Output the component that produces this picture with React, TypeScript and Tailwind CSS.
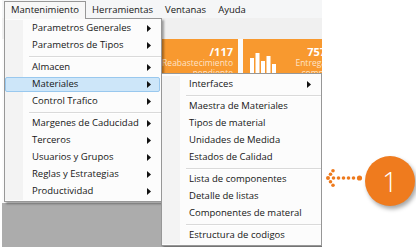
import React from 'react';

type Entry = { label: string; sub?: boolean; active?: boolean } | 'sep';

const mainItems: Entry[] = [
  { label: 'Parametros Generales', sub: true },
  { label: 'Parametros de Tipos', sub: true },
  'sep',
  { label: 'Almacen', sub: true },
  { label: 'Materiales', sub: true, active: true },
  { label: 'Control Trafico', sub: true },
  'sep',
  { label: 'Margenes de Caducidad', sub: true },
  { label: 'Terceros', sub: true },
  { label: 'Usuarios y Grupos', sub: true },
  { label: 'Reglas y Estrategias', sub: true },
  { label: 'Productividad', sub: true },
];

const subItems: Entry[] = [
  { label: 'Interfaces', sub: true },
  'sep',
  { label: 'Maestra de Materiales' },
  { label: 'Tipos de material' },
  { label: 'Unidades de Medida' },
  { label: 'Estados de Calidad' },
  'sep',
  { label: 'Lista de componentes' },
  { label: 'Detalle de listas' },
  { label: 'Componentes de materal' },
  'sep',
  { label: 'Estructura de codigos' },
];

const SubArrow = () => (
  <svg width="4" height="7" viewBox="0 0 4 7" className="shrink-0">
    <polygon points="0,0 4,3.5 0,7" fill="#111" />
  </svg>
);

const MenuList = ({ items }: { items: Entry[] }) => (
  <div className="relative">
    {/* gutter for icons */}
    <div className="absolute left-0 top-0 bottom-0 w-[18px] bg-[#f3f3f3]" />
    {items.map((item, i) =>
      item === 'sep' ? (
        <div key={i} className="h-[5px] flex items-center pl-[24px]">
          <div className="w-full border-t border-[#dadada] border-b border-b-white" />
        </div>
      ) : (
        <div key={i} className="relative h-[17px] flex">
          <div
            className={`flex-1 flex items-center justify-between pl-[26px] pr-[8px] my-[1px] mr-[1px] rounded-[2px] border ${
              item.active ? 'bg-[#cde6f9] border-[#99c8ee]' : 'border-transparent'
            }`}
          >
            <span className="whitespace-nowrap">{item.label}</span>
            {item.sub && <SubArrow />}
          </div>
        </div>
      )
    )}
  </div>
);

const Tile = ({ className, children }: { className?: string; children?: React.ReactNode }) => (
  <div className={`w-[88px] h-[46px] bg-[#f8992f] shrink-0 ${className ?? ''}`}>{children}</div>
);

const BarsIcon = () => (
  <svg width="26" height="24" viewBox="0 0 26 24">
    <rect x="0" y="6" width="4" height="18" fill="#fff" />
    <rect x="5.5" y="1" width="4" height="23" fill="#fff" />
    <rect x="11" y="9" width="4" height="15" fill="#fff" />
    <rect x="16.5" y="4" width="4" height="20" fill="#fff" />
    <rect x="22" y="12" width="4" height="12" fill="#fff" />
  </svg>
);

export default function App() {
  return (
    <div className="relative w-[416px] h-[251px] bg-white overflow-hidden font-['Segoe_UI','Open_Sans',sans-serif] text-[9.5px] text-[#161616]">
      {/* captured window */}
      <div className="relative ml-[2px] w-[320px] h-[247px] overflow-hidden bg-[#acacac] flex flex-col">
        <div className="h-[18px] bg-[#f5f6f7] flex items-start shrink-0">
          <div className="relative top-[1px] z-30 ml-[2px] h-[18px] px-[6px] flex items-center border border-b-0 border-[#979797] bg-[#f7f7f7]">
            Mantenimiento
          </div>
          <div className="h-[18px] px-[6px] flex items-center mt-[1px]">Herramientas</div>
          <div className="h-[18px] px-[6px] flex items-center mt-[1px]">Ventanas</div>
          <div className="h-[18px] px-[6px] flex items-center mt-[1px]">Ayuda</div>
        </div>
        <div className="h-[21px] bg-[#f0f0f0] shrink-0" />
        <div className="h-[164px] bg-[#fbfbfb] shrink-0 flex gap-[5px] pl-[55px] items-start">
          <Tile />
          <Tile>
            <div className="flex flex-col items-end pt-[7px] pr-[5px] text-[#fde3c7] text-[8.5px] leading-[10px]">
              <span className="text-white font-bold text-[11px] leading-[12px]">/117</span>
              <span>Reabastecimiento</span>
              <span>pendiente</span>
            </div>
          </Tile>
          <Tile className="flex justify-between">
            <div className="pl-[7px] pt-[13px]">
              <BarsIcon />
            </div>
            <div className="flex flex-col items-end pt-[7px] pr-[5px] text-[#fde3c7] text-[8.5px] leading-[10px]">
              <span className="text-white font-bold text-[11px] leading-[12px]">757</span>
              <span>Entrega</span>
              <span>comp.</span>
            </div>
          </Tile>
        </div>

        {/* Mantenimiento dropdown */}
        <div className="absolute left-[2px] top-[18px] w-[158px] z-20 bg-[#fcfcfc] border border-[#979797] pt-[1px] pb-[1px] shadow-[2px_2px_2px_rgba(0,0,0,0.35)]">
          <MenuList items={mainItems} />
        </div>

        {/* Materiales submenu */}
        <div className="absolute left-[159px] top-[73px] w-[161px] z-20 bg-[#fcfcfc] border border-[#979797] pt-[2px] pb-[1px] shadow-[2px_2px_2px_rgba(0,0,0,0.35)]">
          <MenuList items={subItems} />
        </div>
      </div>

      {/* callout */}
      <svg className="absolute left-[322px] top-[164px]" width="44" height="30" viewBox="322 164 44 30">
        <g fill="#ee7a1d">
          <circle cx="328" cy="178" r="2" />
          <circle cx="330.5" cy="174.3" r="1.8" />
          <circle cx="333" cy="170.8" r="1.8" />
          <circle cx="330.5" cy="181.7" r="1.8" />
          <circle cx="333" cy="185.2" r="1.8" />
          <circle cx="333.5" cy="178" r="1.8" />
          <circle cx="338.5" cy="178" r="1.8" />
          <circle cx="343.5" cy="178" r="1.8" />
          <circle cx="348.5" cy="178" r="1.8" />
          <circle cx="353.5" cy="178" r="1.8" />
          <circle cx="359.5" cy="178" r="2.6" />
        </g>
      </svg>
      <div className="absolute left-[365px] top-[156px] w-[50px] h-[50px] rounded-full bg-[#ef7b1e] shadow-[2px_3px_4px_rgba(0,0,0,0.35)] flex items-center justify-center text-white text-[27px] font-['Open_Sans',sans-serif] font-light leading-none">
        1
      </div>
    </div>
  );
}
